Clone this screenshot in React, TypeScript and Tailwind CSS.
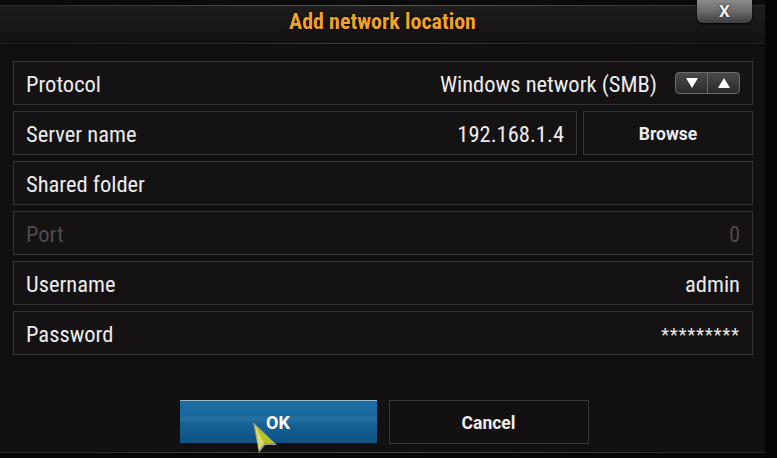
import React from 'react';

const font = { fontFamily: 'Roboto, "Liberation Sans", sans-serif' };

const Row = ({ children, className = '' }: { children: React.ReactNode; className?: string }) => (
  <div className={`h-[44px] flex items-center justify-between px-[12px] pt-[3px] border border-[#363435] bg-[#141213] ${className}`}>
    {children}
  </div>
);

const Label = ({ text, dim }: { text: string; dim?: boolean }) => (
  <span className={`text-[22.5px] leading-none font-stretch-condensed ${dim ? 'text-[#4e4c4d]' : 'text-[#ececec]'}`}>{text}</span>
);

const Spinner = () => (
  <div className="flex h-[22px] w-[65px] -mt-[3px] rounded-[4px] border border-[#6b6b6b] bg-gradient-to-b from-[#4a4a4a] to-[#2a2a2a] overflow-hidden">
    <div className="flex-1 flex items-center justify-center border-r border-[#6b6b6b]">
      <svg width="12" height="10" viewBox="0 0 12 10"><polygon points="0,0 12,0 6,10" fill="#fff" /></svg>
    </div>
    <div className="flex-1 flex items-center justify-center">
      <svg width="12" height="10" viewBox="0 0 12 10"><polygon points="0,10 12,10 6,0" fill="#fff" /></svg>
    </div>
  </div>
);

export default function App() {
  return (
    <div className="w-[777px] h-[458px] bg-[#050505] flex overflow-hidden" style={font}>
      <div className="relative w-[765px] h-[458px] bg-[#121011] flex flex-col">
        {/* header */}
        <div className="relative h-[46px] flex flex-col">
          <div className="h-[5px] bg-[#0c0b0b]" />
          <div className="h-[1px] bg-gradient-to-r from-[#2a2a2a] via-[#5a5a5a] to-[#2a2a2a]" />
          <div className="flex-1 flex items-center justify-center pb-[5px] bg-gradient-to-b from-[#1e1c1d] via-[#191718] to-[#121011]">
            <span className="text-[22px] leading-none font-bold text-[#f0a224] font-stretch-condensed [text-shadow:1px_1px_1px_#000,0_0_3px_#000]">Add network location</span>
          </div>
          <div className="h-[1px] bg-gradient-to-r from-[#1e1e1e] via-[#3c3c3c] to-[#1e1e1e]" />
          <div className="h-[2px] bg-[#0e0d0d]" />
          <div className="absolute right-[13px] top-0 w-[55px] h-[23px] rounded-b-[6px] bg-gradient-to-b from-[#8a8a8a] via-[#6a6a6a] to-[#3e3e3e] flex items-center justify-center shadow-[0_1px_2px_#000]">
            <span className="text-[17px] font-bold text-[#f2f2f2] leading-none [text-shadow:0_0_2px_#000]">X</span>
          </div>
        </div>

        {/* fields */}
        <div className="flex flex-col gap-[6px] pl-[13px] pr-[12px] pt-[15px]">
          <Row>
            <Label text="Protocol" />
            <div className="flex items-center gap-[18px]">
              <Label text="Windows network (SMB)" />
              <Spinner />
            </div>
          </Row>
          <div className="flex gap-[6px]">
            <Row className="flex-1">
              <Label text="Server name" />
              <Label text="192.168.1.4" />
            </Row>
            <div className="w-[170px] h-[44px] pt-[2px] border border-[#363435] bg-[#141213] flex items-center justify-center">
              <span className="text-[17.5px] font-bold text-[#ececec]">Browse</span>
            </div>
          </div>
          <Row>
            <Label text="Shared folder" />
          </Row>
          <Row>
            <Label text="Port" dim />
            <Label text="0" dim />
          </Row>
          <Row>
            <Label text="Username" />
            <Label text="admin" />
          </Row>
          <Row>
            <Label text="Password" />
            <span className="text-[18px] leading-none text-[#ececec] tracking-[1px]">*********</span>
          </Row>
        </div>

        {/* buttons */}
        <div className="flex justify-center gap-[12px] pt-[45px] pl-[3px]">
          <div className="relative w-[197px] h-[43px] pt-[1px] border-t border-[#9bb8cc] bg-gradient-to-b from-[#1b6ea6] via-[#176397] to-[#0d5283] flex items-center justify-center overflow-hidden">
            <div className="absolute left-0 right-0 top-[14px] h-[8px] bg-gradient-to-b from-transparent via-[#ffffff14] to-transparent" />
            <span className="relative text-[18px] font-bold text-white">OK</span>
          </div>
          <div className="w-[200px] h-[44px] pt-[2px] border border-[#3a3839] bg-[#121011] flex items-center justify-center">
            <span className="text-[17.5px] font-bold text-[#ececec]">Cancel</span>
          </div>
        </div>

        <div className="absolute left-0 right-0 top-[452px] h-[1px] bg-gradient-to-r from-[#2a2a2a] via-[#4a4a4a] to-[#2a2a2a]" />
        <div className="absolute left-0 right-0 top-[453px] bottom-0 bg-[#080707]" />

        {/* pointer */}
        <svg className="absolute left-[250px] top-[419px]" width="30" height="36" viewBox="0 0 30 36">
          <polygon points="3,3 27,26 15,26 9,34" fill="#9a9a9a" />
          <polygon points="5,6 24,24 14,24 9,31" fill="#b6c21e" />
          <polygon points="5,6 14,24 9,31" fill="#d8dc70" />
        </svg>
      </div>
    </div>
  );
}
